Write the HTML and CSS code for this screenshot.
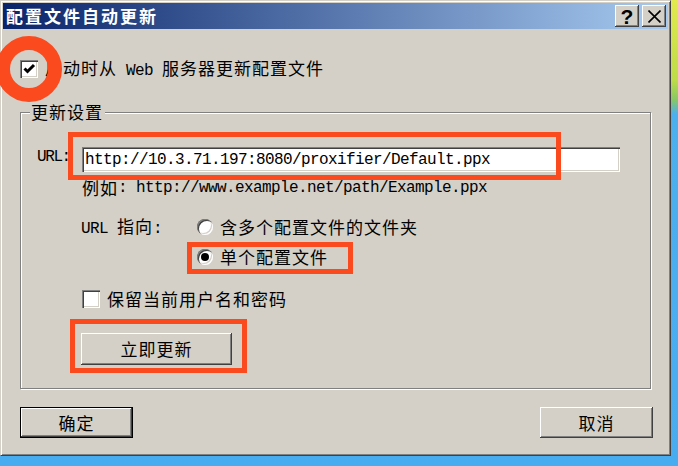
FILE: index.html
```html
<!DOCTYPE html>
<html lang="zh-CN">
<head>
<meta charset="utf-8">
<title>配置文件自动更新</title>
<link rel="stylesheet" href="styles.css">
</head>
<body>
<div class="win">
  <div class="titlebar">
    <span class="title">配置文件自动更新</span>
    <div class="tbtns">
      <button class="tbtn help">?</button>
      <button class="tbtn close"><svg width="13" height="13" viewBox="0 0 13 13"><path d="M0.5 0.5 L12.5 12.5 M12.5 0.5 L0.5 12.5" stroke="#000" stroke-width="1.6" fill="none"/></svg></button>
    </div>
  </div>
  <div class="content">
    <div class="row chkrow">
      <span class="chk"><svg width="14" height="14" viewBox="0 0 14 14"><polyline points="2.5,6.5 5.5,9.5 12,3" stroke="#000" stroke-width="3" fill="none"/></svg></span>
      <span class="lbl">启动时从<span class="m"> Web </span>服务器更新配置文件</span>
    </div>
    <div class="group">
      <span class="legend">更新设置</span>
      <div class="urlrow">
        <span class="m urllbl">URL:</span>
        <input class="field m" type="text" value="http://10.3.71.197:8080/proxifier/Default.ppx" readonly>
      </div>
      <div class="row example">例如<span class="m">: http://www.example.net/path/Example.ppx</span></div>
      <div class="row target">
        <span class="tlabel"><span class="m">URL </span>指向<span class="m">:</span></span>
        <span class="radio"></span>
        <span class="rtext">含多个配置文件的文件夹</span>
      </div>
      <div class="row radiorow">
        <span class="radio on"></span>
        <span class="rtext">单个配置文件</span>
      </div>
      <div class="row chkrow2">
        <span class="chk"></span>
        <span class="lbl">保留当前用户名和密码</span>
      </div>
      <button class="btn update">立即更新</button>
    </div>
    <div class="actions">
      <button class="btn default">确定</button>
      <button class="btn">取消</button>
    </div>
  </div>
  <div class="mark ring"></div>
  <div class="mark box box1"></div>
  <div class="mark box box2"></div>
  <div class="mark box box3"></div>
</div>
</body>
</html>
```
FILE: styles.css
```css
* { box-sizing: border-box; }
html, body { margin: 0; padding: 0; }
body {
  width: 678px;
  height: 466px;
  overflow: hidden;
  background: linear-gradient(180deg, #e2ea4e 0, #bddc48 80px, #86c866 100px, #4cb0ee 114px, #48acf0 466px);
  font-family: "Noto Sans CJK SC", sans-serif;
  color: #000;
}
.win {
  position: relative;
  width: 671px;
  height: 456px;
  background: #d4d0c8;
  border: 1px solid;
  border-color: #d4d0c8 #404040 #404040 #d4d0c8;
  box-shadow: inset 1px 1px 0 #fff, inset -1px -1px 0 #808080;
  padding: 2px;
  display: flex;
  flex-direction: column;
}
.titlebar {
  height: 26px;
  flex: none;
  background: linear-gradient(90deg, #0a246a 0%, #a6caf0 100%);
  display: flex;
  align-items: center;
  padding: 0 2px 0 3px;
}
.title {
  color: #fff;
  font-weight: bold;
  font-size: 17px;
  letter-spacing: 2px;
  line-height: 26px;
}
.tbtns {
  margin-left: auto;
  display: flex;
  gap: 3px;
}
.tbtn {
  width: 24px;
  height: 22px;
  padding: 0;
  margin: 0;
  border: none;
  background: #d4d0c8;
  box-shadow: inset -1px -1px 0 #404040, inset 1px 1px 0 #fff, inset -2px -2px 0 #808080;
  display: flex;
  align-items: center;
  justify-content: center;
  font: bold 21px/22px "Liberation Sans", sans-serif;
  color: #000;
}
.help { padding-top: 1px; }
.content {
  padding-left: 17px;
  display: flex;
  flex-direction: column;
}
.m {
  font-family: "Liberation Mono", monospace;
  font-size: 16px;
  letter-spacing: -0.6px;
}
.row {
  display: flex;
  align-items: center;
  height: 18px;
  line-height: 18px;
  font-size: 17px;
  letter-spacing: 1px;
  white-space: pre;
}
.lbl, .rtext, .tlabel { white-space: pre; }
.chkrow { margin-top: 31px; }
.chk {
  width: 18px;
  height: 18px;
  flex: none;
  background: #fff;
  box-shadow: inset 1px 1px 0 #808080, inset 2px 2px 0 #404040, inset -1px -1px 0 #fff, inset -2px -2px 0 #d4d0c8;
  display: flex;
  align-items: center;
  justify-content: center;
}
.chkrow .lbl, .chkrow2 .lbl { margin-left: 7px; }
.group {
  position: relative;
  width: 631px;
  margin-top: 34px;
  border: 1px solid #808080;
  box-shadow: inset 1px 1px 0 #fff, 1px 1px 0 #fff;
  padding: 34px 0 23px 16px;
  display: flex;
  flex-direction: column;
  align-items: flex-start;
}
.legend {
  position: absolute;
  left: 9px;
  top: -10px;
  background: #d4d0c8;
  padding: 0 2px 0 1px;
  font-size: 17px;
  letter-spacing: 1px;
  line-height: 18px;
}
.urlrow {
  display: flex;
  align-items: center;
  height: 25px;
}
.urllbl {
  width: 45px;
  line-height: 18px;
  margin-top: -6px;
  letter-spacing: -1.4px;
}
.field {
  width: 538px;
  height: 25px;
  border: none;
  margin: 0;
  padding: 0 0 0 3px;
  background: #fff;
  color: #000;
  outline: none;
  box-shadow: inset 1px 1px 0 #808080, inset 2px 2px 0 #404040, inset -1px -1px 0 #fff, inset -2px -2px 0 #d4d0c8;
}
.example { margin-top: 7px; margin-left: 45px; }
.target { margin-top: 21px; margin-left: 44px; }
.tlabel { width: 116px; flex: none; }
.radio {
  position: relative;
  width: 16px;
  height: 16px;
  flex: none;
  border-radius: 50%;
  background: #fff;
  box-shadow: inset 1px 1px 0 #808080, inset 2px 2px 0 #404040, inset -1px -1px 0 #fff, inset -2px -2px 0 #d4d0c8;
}
.radio.on::after {
  content: "";
  position: absolute;
  left: 4px;
  top: 4px;
  width: 8px;
  height: 8px;
  border-radius: 50%;
  background: #000;
}
.rtext { margin-left: 7px; }
.radiorow { margin-top: 12px; margin-left: 160px; }
.chkrow2 { margin-top: 24px; margin-left: 45px; }
.btn {
  margin: 0;
  padding: 0;
  border: none;
  background: #d4d0c8;
  color: #000;
  font-family: "Noto Sans CJK SC", sans-serif;
  font-size: 17px;
  letter-spacing: 1px;
  line-height: 18px;
  box-shadow: inset -1px -1px 0 #404040, inset 1px 1px 0 #fff, inset -2px -2px 0 #808080;
}
.update {
  width: 151px;
  height: 32px;
  margin-top: 25px;
  margin-left: 44px;
}
.actions {
  margin-top: 18px;
  width: 633px;
  display: flex;
  justify-content: space-between;
}
.actions .btn { width: 113px; height: 31px; }
.btn.default {
  border: 1px solid #000;
  box-shadow: inset -1px -1px 0 #404040, inset 1px 1px 0 #fff, inset -2px -2px 0 #808080;
}
.mark {
  position: absolute;
  border: 5px solid #fb4a1e;
  pointer-events: none;
}
.ring {
  left: -5px;
  top: 35px;
  width: 66px;
  height: 66px;
  border-width: 14px;
  border-radius: 50%;
}
.box1 { left: 67px; top: 131px; width: 493px; height: 48px; }
.box2 { left: 186px; top: 241px; width: 166px; height: 32px; }
.box3 { left: 69px; top: 318px; width: 177px; height: 54px; }
```
